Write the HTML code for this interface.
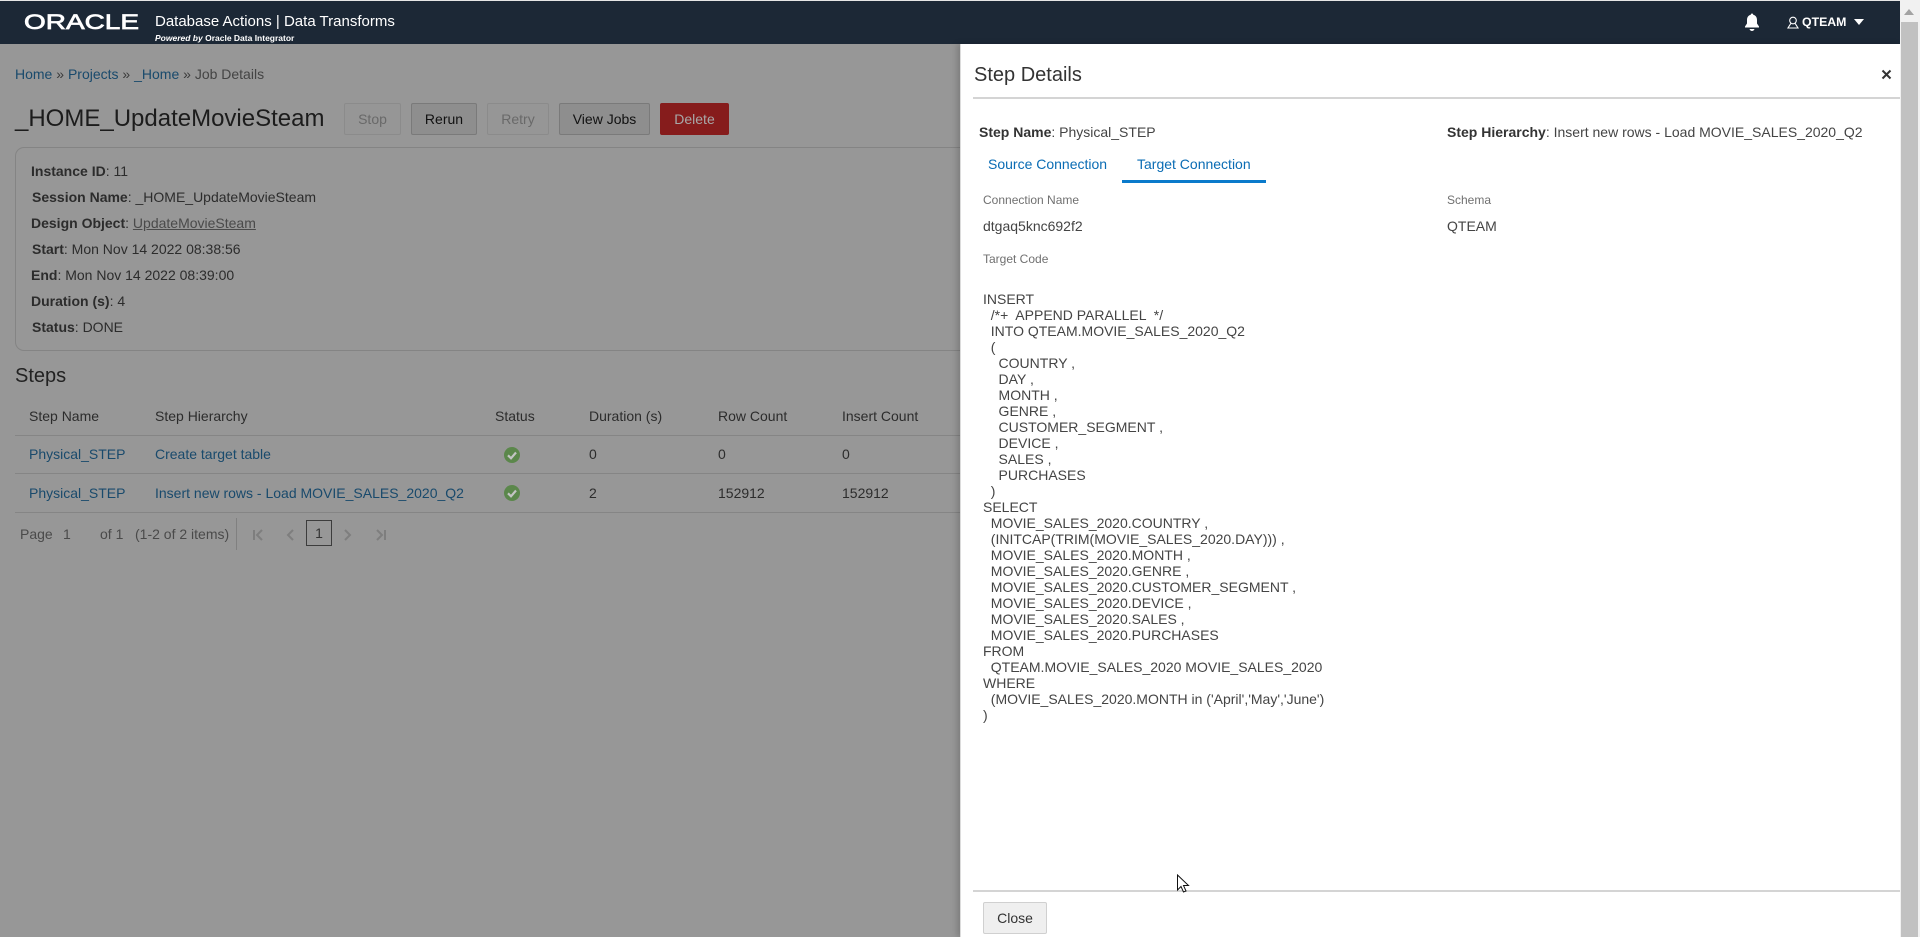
<!DOCTYPE html>
<html><head><meta charset="utf-8"><title>Data Transforms</title>
<style>
html,body{margin:0;padding:0;width:1920px;height:937px;overflow:hidden;background:#fff}
body{font-family:"Liberation Sans",Arial,sans-serif;font-size:14px;color:#333;position:relative}
.a{position:absolute;white-space:pre;line-height:20px}
#dim{position:absolute;left:0;top:0;width:1900px;height:937px;background:#979797}
.lnk{color:#194a6c}
.d{color:#2c2c2c}
b{font-weight:700}
.btn{position:absolute;top:103px;height:30px;line-height:30px;text-align:center;border:1px solid #7a7a7a;border-radius:2px;background:#8e8e8e;color:#111;font-size:14px}
.btn.dis{background:#969696;border-color:#8b8b8b;color:#696969}
.hl{position:absolute;height:1px;background:#858585}
</style></head><body>
<div id="dim"></div>

<!-- header -->
<div class="a" style="left:0;top:0;width:1900px;height:1px;background:#e6e6e6"></div>
<div class="a" style="left:0;top:1px;width:1900px;height:43px;background:#1c2836"></div>
<svg class="a" style="left:20px;top:8px" width="130" height="28"><text x="4" y="21" font-family="Liberation Sans" font-size="21" fill="#fff" stroke="#fff" stroke-width=".7" textLength="115" lengthAdjust="spacingAndGlyphs">ORACLE</text></svg>
<div class="a" style="left:155px;top:12px;color:#fff;font-size:15px">Database Actions | Data Transforms</div>
<div class="a" style="left:155px;top:28px;color:#fff;font-size:8.5px;font-weight:700"><i>Powered by</i> Oracle Data Integrator</div>
<svg class="a" style="left:1744px;top:13px" width="16" height="19" viewBox="0 0 16 19"><path d="M8 0.5c.8 0 1.2.6 1.2 1.3C11.8 2.4 13 4.4 13 7v3.5l2 3v1H1v-1l2-3V7c0-2.6 1.200-4.600 3.800-5.200C6.800 1.100 7.200.5 8 .5z" fill="#fff"/><path d="M5.500 16h5c-.4 1.200-1.400 2-2.500 2s-2.100-.8-2.500-2z" fill="#fff"/></svg>
<svg class="a" style="left:1787px;top:16px" width="12" height="13" viewBox="0 0 12 13" fill="none" stroke="#fff" stroke-width="1.100"><circle cx="6" cy="4.500" r="3.300"/><path d="M3.800 7.500L1 12h10L8.200 7.500"/></svg>
<div class="a" style="left:1802px;top:12px;color:#fff;font-size:12.300px;font-weight:700">QTEAM</div>
<svg class="a" style="left:1854px;top:18px" width="11" height="8"><path d="M0 1h10L5 7z" fill="#fff"/></svg>

<!-- left page -->
<div class="a" style="left:15px;top:64px"><span class="lnk">Home</span> <span style="color:#3a3a3a">»</span> <span class="lnk">Projects</span> <span style="color:#3a3a3a">»</span> <span class="lnk">_Home</span> <span style="color:#3a3a3a">»</span> <span style="color:#444">Job Details</span></div>
<div class="a" style="left:15px;top:105px;font-size:24px;line-height:28px;color:#1c1c1c">_HOME_UpdateMovieSteam</div>
<div class="btn dis" style="left:344px;width:55px">Stop</div>
<div class="btn" style="left:411px;width:64px">Rerun</div>
<div class="btn dis" style="left:487px;width:60px">Retry</div>
<div class="btn" style="left:559px;width:89px">View Jobs</div>
<div class="btn" style="left:660px;background:#861c1c;border-color:#861c1c;color:#a8a8a8;width:67px">Delete</div>

<div class="a" style="left:15px;top:147px;width:990px;height:202px;border:1px solid #848484;border-radius:9px"></div>
<div class="a d" style="left:31px;top:161px"><b>Instance ID</b>: 11</div>
<div class="a d" style="left:32px;top:187px"><b>Session Name</b>: _HOME_UpdateMovieSteam</div>
<div class="a d" style="left:31px;top:213px"><b>Design Object</b>: <span style="color:#4a4a4a;text-decoration:underline">UpdateMovieSteam</span></div>
<div class="a d" style="left:32px;top:239px"><b>Start</b>: Mon Nov 14 2022 08:38:56</div>
<div class="a d" style="left:31px;top:265px"><b>End</b>: Mon Nov 14 2022 08:39:00</div>
<div class="a d" style="left:31px;top:291px"><b>Duration (s)</b>: 4</div>
<div class="a d" style="left:32px;top:317px"><b>Status</b>: DONE</div>
<div class="a" style="left:15px;top:364px;font-size:20px;line-height:24px;color:#222">Steps</div>

<div class="a d" style="left:29px;top:406px">Step Name</div>
<div class="a d" style="left:155px;top:406px">Step Hierarchy</div>
<div class="a d" style="left:495px;top:406px">Status</div>
<div class="a d" style="left:589px;top:406px">Duration (s)</div>
<div class="a d" style="left:718px;top:406px">Row Count</div>
<div class="a d" style="left:842px;top:406px">Insert Count</div>
<div class="hl" style="left:15px;top:435px;width:945px"></div>
<div class="a lnk" style="left:29px;top:444px">Physical_STEP</div>
<div class="a lnk" style="left:155px;top:444px">Create target table</div>
<svg class="a" style="left:504px;top:447px" width="16" height="16"><circle cx="8" cy="8" r="8" fill="#5b874b"/><path d="M4 8.300l3 3 5-5.800" stroke="#c4c4c4" stroke-width="2.200" fill="none"/></svg>
<div class="a d" style="left:589px;top:444px">0</div><div class="a d" style="left:718px;top:444px">0</div><div class="a d" style="left:842px;top:444px">0</div>
<div class="hl" style="left:15px;top:473px;width:945px"></div>
<div class="a lnk" style="left:29px;top:483px">Physical_STEP</div>
<div class="a lnk" style="left:155px;top:483px">Insert new rows - Load MOVIE_SALES_2020_Q2</div>
<svg class="a" style="left:504px;top:485px" width="16" height="16"><circle cx="8" cy="8" r="8" fill="#5b874b"/><path d="M4 8.300l3 3 5-5.800" stroke="#c4c4c4" stroke-width="2.200" fill="none"/></svg>
<div class="a d" style="left:589px;top:483px">2</div><div class="a d" style="left:718px;top:483px">152912</div><div class="a d" style="left:842px;top:483px">152912</div>
<div class="hl" style="left:15px;top:512px;width:945px"></div>

<div class="a" style="left:20px;top:524px;color:#4a4a4a">Page</div>
<div class="a" style="left:63px;top:524px;color:#4a4a4a">1</div>
<div class="a" style="left:100px;top:524px;color:#4a4a4a">of 1</div>
<div class="a" style="left:135px;top:524px;color:#4a4a4a">(1-2 of 2 items)</div>
<div class="a" style="left:236px;top:518px;width:1px;height:32px;background:#808080"></div>
<svg class="a" style="left:250px;top:526px" width="140" height="18" fill="none" stroke="#7e7e7e" stroke-width="2"><path d="M4 4v10M12 4l-5 5 5 5"/><path d="M43 4l-5 5 5 5"/><path d="M95 4l5 5-5 5"/><path d="M127 4l5 5-5 5M135 4v10"/></svg>
<div class="a" style="left:306px;top:520px;width:24px;height:24px;line-height:24px;border:1px solid #3c3c3c;text-align:center;color:#333">1</div>

<!-- panel -->
<div class="a" style="left:960px;top:44px;width:940px;height:893px;background:#fff;border-left:1px solid #dcdcdc;box-sizing:border-box;box-shadow:-3px 0 6px rgba(0,0,0,.18)"></div>
<div class="a" style="left:974px;top:63px;font-size:20px;line-height:24px;color:#333">Step Details</div>
<svg class="a" style="left:1880px;top:68px" width="13" height="13"><path d="M2.500 2.500l8 8M10.500 2.500l-8 8" stroke="#333" stroke-width="2"/></svg>
<div class="a" style="left:973px;top:97px;width:927px;height:2px;background:#d4d4d4"></div>
<div class="a" style="left:979px;top:122px;color:#444"><b style="color:#333">Step Name</b>: Physical_STEP</div>
<div class="a" style="left:1447px;top:122px;color:#444"><b style="color:#333">Step Hierarchy</b>: Insert new rows - Load MOVIE_SALES_2020_Q2</div>
<div class="a" style="left:988px;top:154px;color:#0a6cb4">Source Connection</div>
<div class="a" style="left:1137px;top:154px;color:#0a6cb4">Target Connection</div>
<div class="a" style="left:1122px;top:180px;width:144px;height:3px;background:#0a7acb"></div>
<div class="a" style="left:983px;top:190px;font-size:12px;color:#707070">Connection Name</div>
<div class="a" style="left:1447px;top:190px;font-size:12px;color:#707070">Schema</div>
<div class="a" style="left:983px;top:216px;color:#444">dtgaq5knc692f2</div>
<div class="a" style="left:1447px;top:216px;color:#444">QTEAM</div>
<div class="a" style="left:983px;top:249px;font-size:12px;color:#707070">Target Code</div>
<div class="a" style="left:983px;top:291px;line-height:16px;color:#444">INSERT
  /*+  APPEND PARALLEL  */
  INTO QTEAM.MOVIE_SALES_2020_Q2
  (
    COUNTRY ,
    DAY ,
    MONTH ,
    GENRE ,
    CUSTOMER_SEGMENT ,
    DEVICE ,
    SALES ,
    PURCHASES
  )
SELECT
  MOVIE_SALES_2020.COUNTRY ,
  (INITCAP(TRIM(MOVIE_SALES_2020.DAY))) ,
  MOVIE_SALES_2020.MONTH ,
  MOVIE_SALES_2020.GENRE ,
  MOVIE_SALES_2020.CUSTOMER_SEGMENT ,
  MOVIE_SALES_2020.DEVICE ,
  MOVIE_SALES_2020.SALES ,
  MOVIE_SALES_2020.PURCHASES
FROM
  QTEAM.MOVIE_SALES_2020 MOVIE_SALES_2020
WHERE
  (MOVIE_SALES_2020.MONTH in ('April','May','June')
)</div>
<div class="a" style="left:973px;top:890px;width:927px;height:2px;background:#d4d4d4"></div>
<div class="a" style="left:983px;top:902px;width:62px;height:30px;line-height:30px;border:1px solid #d0d0d0;border-radius:2px;background:#efefef;color:#333;text-align:center">Close</div>
<svg class="a" style="left:1176px;top:874px" width="14" height="20"><path d="M1.500 1v15l3.500-3.500 2.500 5.500 2.500-1-2.500-5.500h5z" fill="#fff" stroke="#111" stroke-width="1"/></svg>

<!-- scrollbar -->
<div class="a" style="left:1900px;top:0;width:20px;height:937px;background:#f1f1f1"></div>
<div class="a" style="left:1901px;top:22px;width:17px;height:915px;background:#c1c1c1"></div>
<svg class="a" style="left:1904px;top:9px" width="11" height="7"><path d="M0 6h10L5 0z" fill="#a3a3a3"/></svg>
</body></html>
